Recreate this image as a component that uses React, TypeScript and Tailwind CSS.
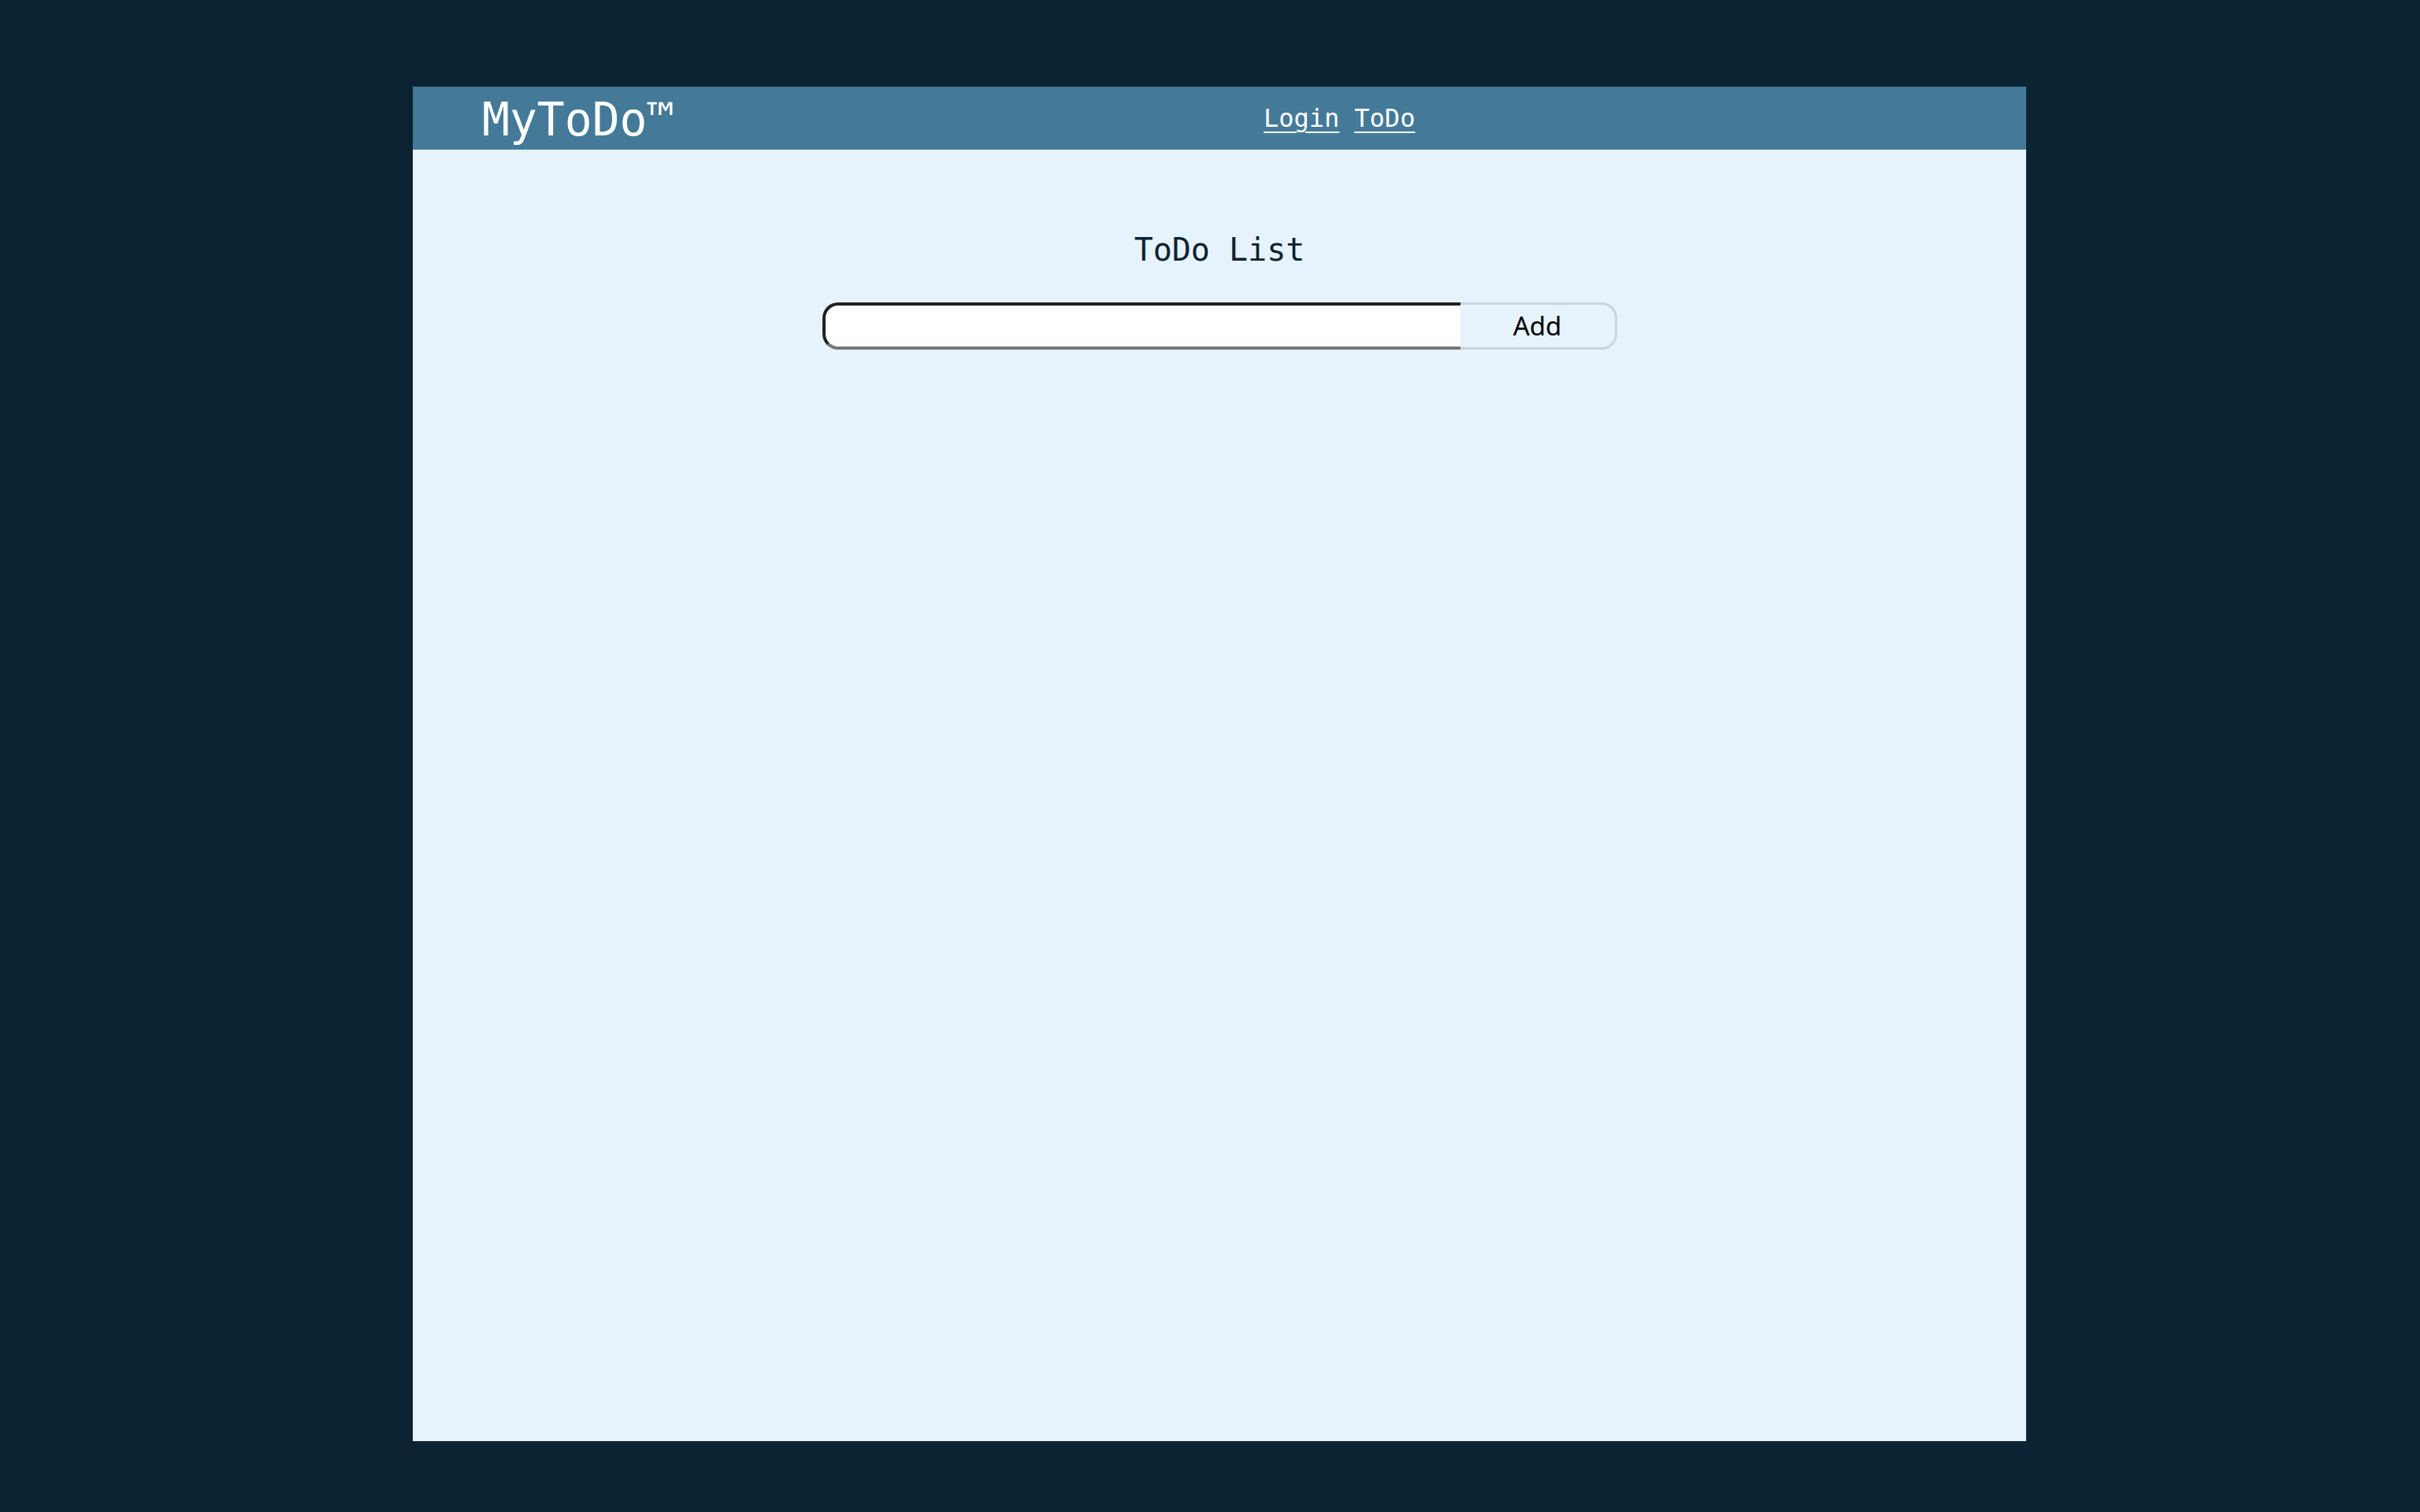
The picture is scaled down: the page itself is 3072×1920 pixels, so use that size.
export default function App() {
  return (
    <div className="min-h-screen w-full bg-[#0c2334] pt-[110px] pb-[90px]">
      <div className="ml-[524px] flex h-[1720px] w-[2048px] flex-col bg-[#e6f3fc]">
        <header className="flex h-[80px] items-center bg-[#447a98] pl-[88px]">
          <div className="w-[992px] pt-[4px] text-[58px] leading-[80px] text-white [font-family:'DejaVu_Sans_Mono',monospace]">
            MyToDo™
          </div>
          <nav className="flex gap-[19px] text-[32px] leading-[40px] text-white [font-family:'DejaVu_Sans_Mono',monospace]">
            <a href="#" className="underline underline-offset-[6px] decoration-[2px]">Login</a>
            <a href="#" className="underline underline-offset-[6px] decoration-[2px]">ToDo</a>
          </nav>
        </header>
        <main className="flex flex-col items-center">
          <h1 className="mt-[103px] text-[40px] leading-[48px] text-[#0c2233] [font-family:'DejaVu_Sans_Mono',monospace]">
            ToDo List
          </h1>
          <form className="mt-[43px] flex" onSubmit={(e) => e.preventDefault()}>
            <input
              type="text"
              className="h-[60px] w-[810px] rounded-l-[20px] border-t-[4px] border-l-[4px] border-b-[4px] border-r-0 border-t-[#222222] border-l-[#222222] border-b-[#777777] bg-white px-4 text-[28px] outline-none"
            />
            <button
              type="submit"
              className="h-[60px] w-[199px] rounded-r-[20px] border-[3px] border-l-0 border-[#c8d4de] bg-[#e6f3fc] text-[33px] text-black [font-family:'Noto_Sans',sans-serif]"
            >
              Add
            </button>
          </form>
        </main>
      </div>
    </div>
  );
}
